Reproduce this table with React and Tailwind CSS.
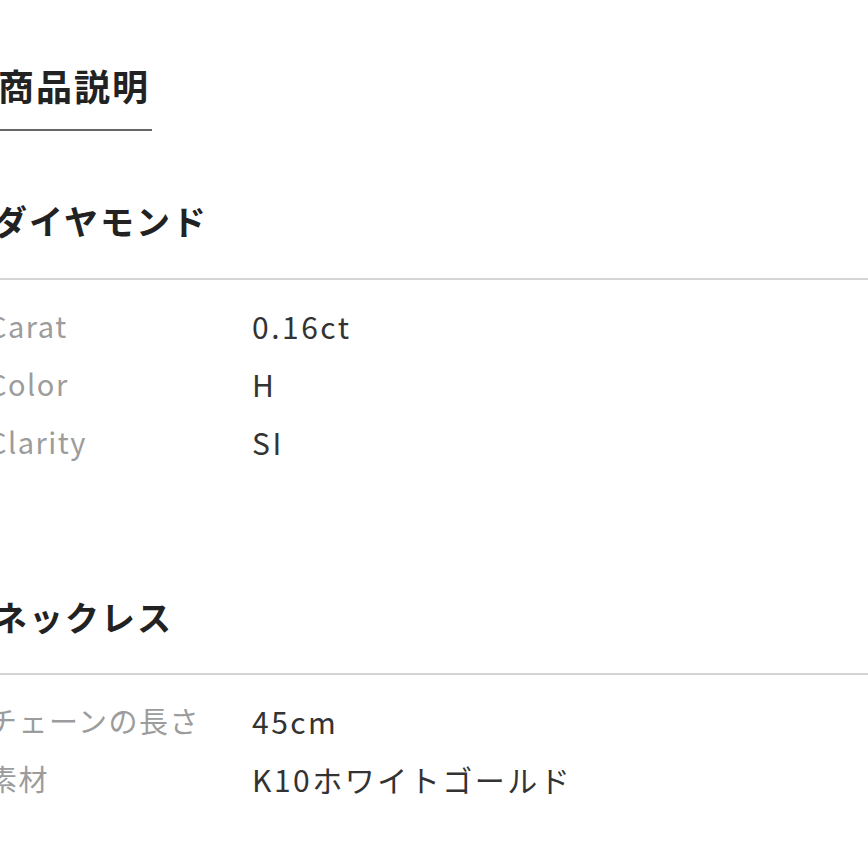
import React from "react";

const sections = [
  {
    title: "ダイヤモンド",
    rows: [
      ["Carat", "0.16ct"],
      ["Color", "H"],
      ["Clarity", "SI"],
    ],
  },
  {
    title: "ネックレス",
    rows: [
      ["チェーンの長さ", "45cm"],
      ["素材", "K10ホワイトゴールド"],
    ],
  },
];

const Section = ({ title, rows, first }) => (
  <section className={first ? "mt-[73px]" : "mt-[129px]"}>
    {/* Section heading + divider */}
    <div className={`border-b-2 border-[#d4d4d4] ${first ? "pb-[40px]" : "pb-[39px]"}`}>
      <h3 className="ml-[-7px] text-[34px] font-bold leading-none tracking-[2px] text-[#222]">
        {title}
      </h3>
    </div>
    <dl className="pt-[17px]">
      {rows.map(([label, value]) => (
        <div key={label} className="flex h-[58px] items-center">
          <dt className="ml-[-12px] w-[264px] shrink-0 text-[29px] tracking-[1.5px] text-[#9c9c9c]">
            {label}
          </dt>
          <dd className="text-[30px] tracking-[2.5px] text-[#333]">{value}</dd>
        </div>
      ))}
    </dl>
  </section>
);

const App = () => {
  return (
    <div className="h-[868px] w-[868px] overflow-hidden bg-white font-['Noto_Sans_CJK_JP','Noto_Sans',sans-serif]">
      {/* Header */}
      <div className="pt-[67px]">
        <div className="ml-[-12px] w-[164px] border-b-2 border-[#666] pb-[26px]">
          <h2 className="ml-[10px] text-[36px] font-bold leading-none tracking-[2px] text-[#222]">
            商品説明
          </h2>
        </div>
      </div>

      {sections.map((s, i) => (
        <Section key={s.title} title={s.title} rows={s.rows} first={i === 0} />
      ))}
    </div>
  );
};

export default App;
